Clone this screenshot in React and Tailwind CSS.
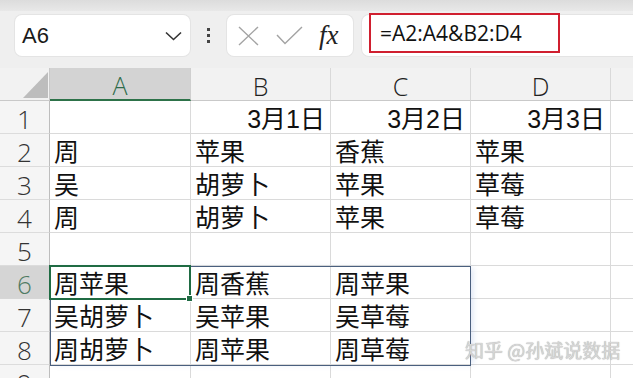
import React from "react";

const font = { fontFamily: '"Liberation Sans","Noto Sans CJK SC",sans-serif' };

const rows = [
  ["", "3月1日", "3月2日", "3月3日"],
  ["周", "苹果", "香蕉", "苹果"],
  ["吴", "胡萝卜", "苹果", "草莓"],
  ["周", "胡萝卜", "苹果", "草莓"],
  ["", "", "", ""],
  ["周苹果", "周香蕉", "周苹果", ""],
  ["吴胡萝卜", "吴苹果", "吴草莓", ""],
  ["周胡萝卜", "周苹果", "周草莓", ""],
  ["", "", "", ""],
];

function Toolbar() {
  return (
    <div className="relative h-[68px] bg-[#efefef]">
      <div className="absolute left-0 top-0 h-[11px] w-full bg-gradient-to-b from-[#dcdcdc] to-[#e8e8e8]" />
      <div className="relative flex items-start pt-[15px]">
        <div className="ml-[15px] flex h-[41px] w-[175px] items-center justify-between rounded-[7px] bg-white pl-[7px] pr-[8px] shadow-[0_0_0_1px_#e4e4e4]">
          <span className="text-[22px] leading-none text-[#1a1a1a]" style={font}>A6</span>
          <svg width="17" height="10" viewBox="0 0 17 10">
            <path d="M1 1.5 L8.5 8.5 L16 1.5" fill="none" stroke="#333" strokeWidth="1.6" />
          </svg>
        </div>
        <div className="flex h-[41px] w-[37px] flex-col items-center justify-center gap-[3px]">
          <span className="h-[3px] w-[3px] bg-[#444]" />
          <span className="h-[3px] w-[3px] bg-[#444]" />
          <span className="h-[3px] w-[3px] bg-[#444]" />
        </div>
        <div className="flex h-[41px] w-[126px] items-center rounded-[7px] bg-white pl-[11px] shadow-[0_0_0_1px_#e4e4e4]">
          <svg width="21" height="20" viewBox="0 0 21 20">
            <path d="M1 1 L20 19 M20 1 L1 19" fill="none" stroke="#a3a3a3" strokeWidth="1.4" />
          </svg>
          <svg className="ml-[17px]" width="27" height="19" viewBox="0 0 27 19">
            <path d="M1 9 L9 17.5 L26 1" fill="none" stroke="#a3a3a3" strokeWidth="1.4" />
          </svg>
          <span
            className="ml-[16px] text-[27px] italic leading-none text-[#222]"
            style={{ fontFamily: '"Liberation Serif",serif' }}
          >
            fx
          </span>
        </div>
        <div className="relative ml-[9px] h-[41px] flex-1 rounded-l-[7px] bg-white shadow-[0_0_0_1px_#e4e4e4]">
          <div className="absolute left-[7px] top-[-2px] flex h-[40px] w-[191px] items-center border-[2.5px] border-[#d01f2f] pl-[9px]">
            <span className="text-[21px] leading-none text-[#111]" style={{ fontFamily: '"Open Sans","Liberation Sans",sans-serif' }}>
              =A2:A4&amp;B2:D4
            </span>
          </div>
        </div>
      </div>
    </div>
  );
}

function Sheet() {
  const letters = ["A", "B", "C", "D"];
  return (
    <div className="relative grid grid-cols-[50px_141px_140px_140px_140px_1fr] auto-rows-[33px]" style={font}>
      {/* header row */}
      <div className="relative border-b border-r border-[#c9c9c9] bg-[#f2f2f2]">
        <svg className="absolute left-[23px] top-[4px]" width="25" height="26" viewBox="0 0 25 26">
          <path d="M25 0 L25 26 L0 26 Z" fill="#bdbdbd" />
        </svg>
      </div>
      {letters.map((l, i) => (
        <div
          key={l}
          className={
            i === 0
              ? "flex items-center justify-center border-b-[2px] border-b-[#2d7249] border-r border-r-[#cfcfcf] bg-[#d3d3d3] pt-[4px] text-[25px] font-light leading-none text-[#2d6b4a]"
              : "flex items-center justify-center border-b border-b-[#c9c9c9] border-r border-r-[#d9d9d9] bg-[#f2f2f2] pt-[4px] text-[25px] font-light leading-none text-[#222]"
          }
          style={{ fontFamily: '"Open Sans","Liberation Sans",sans-serif' }}
        >
          {l}
        </div>
      ))}
      <div className="border-b border-[#c9c9c9] bg-[#f2f2f2]" />

      {rows.map((r, ri) => (
        <React.Fragment key={ri}>
          <div
            className={
              ri === 5
                ? "flex items-center justify-center border-b border-r border-b-[#d6d6d6] border-r-[#bdbdbd] bg-[#d5d5d5] pt-[4px] text-[26px] font-light leading-none text-[#4f7a62]"
                : "flex items-center justify-center border-b border-r border-b-[#dcdcdc] border-r-[#bdbdbd] bg-[#f5f5f5] pt-[4px] text-[26px] font-light leading-none text-[#333]"
            }
            style={{ fontFamily: '"Open Sans","Liberation Sans",sans-serif' }}
          >
            {ri + 1}
          </div>
          {r.map((c, ci) => (
            <div
              key={ci}
              className={
                ri === 0
                  ? "flex items-center justify-end overflow-hidden whitespace-nowrap border-b border-r border-[#dadada] bg-white pr-[5px] pt-[4px] text-[25px] leading-none text-[#111]"
                  : "flex items-center overflow-hidden whitespace-nowrap border-b border-r border-[#dadada] bg-white pl-[4px] pt-[4px] text-[25px] leading-none text-[#111]"
              }
            >
              {c}
            </div>
          ))}
          <div className="border-b border-[#dadada] bg-white" />
        </React.Fragment>
      ))}

      {/* spill range border */}
      <div className="pointer-events-none absolute left-[50px] top-[198px] h-[100px] w-[421px] border border-[#4a5f7e] shadow-[4px_0_6px_-2px_rgba(120,150,210,0.25)]" />
      {/* active cell */}
      <div className="pointer-events-none absolute left-[49px] top-[197px] h-[35px] w-[142px] border-[2px] border-[#1f6b43]">
        <div className="absolute bottom-[-4px] right-[-4px] h-[7px] w-[7px] border border-white bg-[#1f6b43]" />
      </div>
      {/* watermark */}
      <div
        className="pointer-events-none absolute left-[465px] top-[272px] whitespace-nowrap text-[19px] leading-none text-[#d6d6d6]"
        style={{ fontFamily: '"Noto Sans CJK SC",sans-serif', textShadow: "0 0 1px #9a9a9a" }}
      >
        知乎 @孙斌说数据
      </div>
    </div>
  );
}

export default function App() {
  return (
    <div className="h-[378px] w-[633px] overflow-hidden bg-white">
      <Toolbar />
      <Sheet />
    </div>
  );
}
